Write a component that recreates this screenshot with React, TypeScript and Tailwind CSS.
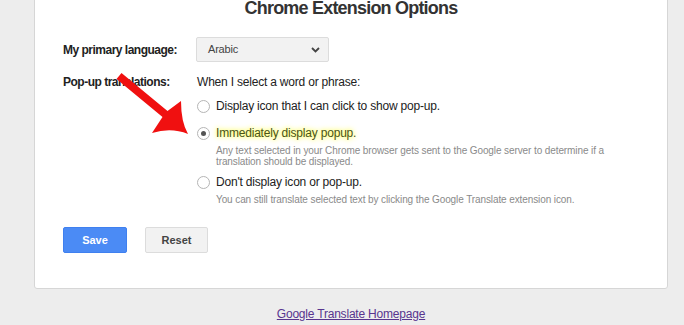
import * as React from "react"

const Radio = ({ checked }: { checked?: boolean }) => (
  <span className="flex h-[13px] w-[13px] shrink-0 items-center justify-center rounded-full border border-[#b5b5b5] bg-white">
    {checked && <span className="h-[5px] w-[5px] rounded-full bg-[#555]" />}
  </span>
)

const Option = ({
  checked,
  label,
  desc,
  glow,
  className,
}: {
  checked?: boolean
  label: string
  desc?: React.ReactNode
  glow?: boolean
  className?: string
}) => (
  <div className={className}>
    <div className="flex h-[16px] items-center gap-[6px]">
      <Radio checked={checked} />
      <span
        className={
          glow
            ? "text-[12px] tracking-[-0.2px] text-[#4a5416] [text-shadow:0_0_4px_#ffff40,0_0_7px_#ffff80]"
            : "text-[12px] tracking-[-0.2px] text-[#222]"
        }
      >
        {label}
      </span>
    </div>
    {desc && (
      <p className="ml-[19px] mt-[4px] text-[10px] leading-[11px] tracking-[-0.1px] text-[#8a8a8a]">
        {desc}
      </p>
    )}
  </div>
)

export default function App() {
  return (
    <div className="relative h-[325px] overflow-hidden bg-[#ededed] font-['Liberation_Sans',Arial,sans-serif]">
      <div className="ml-[34px] w-[634px]">
        <div className="-mt-[20px] rounded-[3px] border border-[#d6d6d6] bg-white px-[28px] pb-[35px] pt-[16px]">
          <h1 className="text-center text-[18px] font-bold leading-[22px] tracking-[-0.8px] text-[#333]">
            Chrome Extension Options
          </h1>

          <div className="mt-[18px] flex items-center">
            <div className="w-[133px] text-[12px] font-bold tracking-[-0.5px] text-[#222]">
              My primary language:
            </div>
            <div className="flex h-[25px] w-[133px] items-center justify-between rounded-[2px] border border-[#dcdcdc] bg-[#f2f2f2] pl-[11px] pr-[8px]">
              <span className="text-[11px] tracking-[-0.2px] text-[#444]">Arabic</span>
              <svg width="9" height="6" viewBox="0 0 9 6" fill="none">
                <path d="M1 1l3.5 3.5L8 1" stroke="#444" strokeWidth="1.8" />
              </svg>
            </div>
          </div>

          <div className="mt-[12px] flex">
            <div className="w-[134px] text-[12px] font-bold leading-[16px] tracking-[-0.5px] text-[#222]">
              Pop-up translations:
            </div>
            <div className="flex-1">
              <div className="text-[12px] leading-[16px] tracking-[-0.2px] text-[#222]">
                When I select a word or phrase:
              </div>
              <Option className="mt-[8px]" label="Display icon that I can click to show pop-up." />
              <Option
                className="mt-[11px]"
                checked
                glow
                label="Immediately display popup."
                desc={
                  <>
                    Any text selected in your Chrome browser gets sent to the Google server to determine if a
                    <br />
                    translation should be displayed.
                  </>
                }
              />
              <Option
                className="mt-[7px]"
                label="Don't display icon or pop-up."
                desc="You can still translate selected text by clicking the Google Translate extension icon."
              />
            </div>
          </div>

          <div className="mt-[22px] flex gap-[18px]">
            <button className="h-[26px] w-[64px] rounded-[2px] border border-[#3f80ef] bg-[#4b8bf5] text-[11px] font-bold text-white">
              Save
            </button>
            <button className="h-[26px] w-[63px] rounded-[2px] border border-[#dcdcdc] bg-[#f2f2f2] text-[11px] font-bold text-[#444]">
              Reset
            </button>
          </div>
        </div>

        <div className="mt-[17px] text-center text-[12px] leading-[16px]">
          <a href="#" className="tracking-[-0.2px] text-[#58358f] underline">
            Google Translate Homepage
          </a>
        </div>
      </div>

      <svg className="pointer-events-none absolute left-0 top-0" width="684" height="325">
        <path
          d="M121.5 72.9 L167.5 110.9 L181 101 Q181 122 188 134 Q171 127 152 133 L162.5 117.1 L116.5 79.1 Z"
          fill="#f01010"
        />
      </svg>
    </div>
  )
}
